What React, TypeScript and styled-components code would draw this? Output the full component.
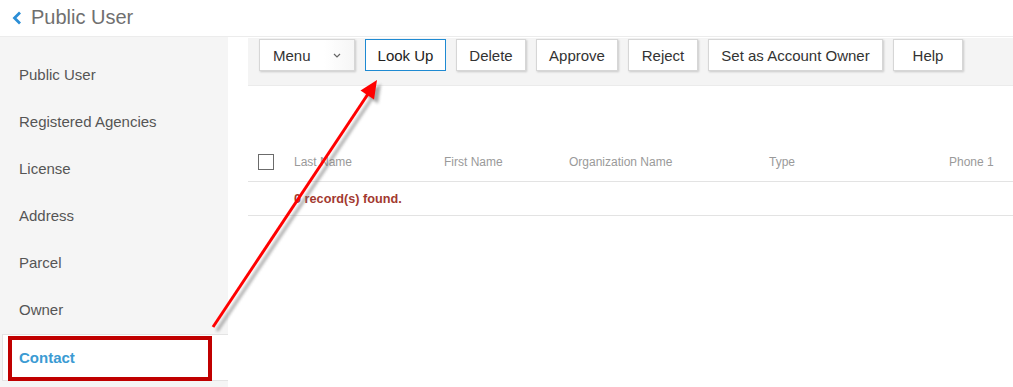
import React from "react";
import styled, { createGlobalStyle } from "styled-components";

const GlobalStyle = createGlobalStyle`
  html, body {
    margin: 0;
    padding: 0;
    background: #ffffff;
    font-family: "Liberation Sans", Arial, sans-serif;
  }
`;

const navItems = [
  "Public User",
  "Registered Agencies",
  "License",
  "Address",
  "Parcel",
  "Owner",
  "Contact",
];

const actions = [
  { label: "Look Up", width: 81, active: true },
  { label: "Delete", width: 70 },
  { label: "Approve", width: 82 },
  { label: "Reject", width: 70 },
  { label: "Set as Account Owner", width: 175 },
  { label: "Help", width: 70 },
];

const columns = [
  { label: "Last Name", width: 150 },
  { label: "First Name", width: 125 },
  { label: "Organization Name", width: 200 },
  { label: "Type", width: 180 },
  { label: "Phone 1", width: 80 },
];

export const App = () => {
  return (
    <Page>
      <GlobalStyle />
      <Header>
        <BackIcon viewBox="0 0 10 14">
          <path d="M8 1.5 L2.5 7 L8 12.5" />
        </BackIcon>
        <HeaderTitle>Public User</HeaderTitle>
      </Header>
      <Body>
        <Sidebar>
          {navItems.map((item) => (
            <NavItem key={item} $active={item === "Contact"}>
              {item}
            </NavItem>
          ))}
        </Sidebar>
        <Main>
          <Toolbar>
            <MenuButton>
              <span>Menu</span>
              <MenuCaret viewBox="0 0 8 5">
                <path d="M1 1 L4 4 L7 1" />
              </MenuCaret>
            </MenuButton>
            {actions.map((a) => (
              <ActionButton key={a.label} $active={a.active} $width={a.width}>
                {a.label}
              </ActionButton>
            ))}
          </Toolbar>
          <Table>
            <HeadRow>
              <CheckCell>
                <CheckBox />
              </CheckCell>
              {columns.map((c) => (
                <HeadCell key={c.label} $width={c.width}>
                  {c.label}
                </HeadCell>
              ))}
            </HeadRow>
            <EmptyRow>0 record(s) found.</EmptyRow>
          </Table>
        </Main>
      </Body>

      <HighlightBox />
      <Annotation width="1013" height="387" viewBox="0 0 1013 387">
        <defs>
          <filter id="arrowShadow" x="-20%" y="-20%" width="140%" height="140%">
            <feGaussianBlur stdDeviation="1.6" />
          </filter>
        </defs>
        <g transform="translate(4 4)" filter="url(#arrowShadow)" opacity="0.6">
          <line x1="213" y1="327" x2="368" y2="94" stroke="#707070" strokeWidth="3" />
          <polygon points="377,80 374,99.5 360.5,90.5" fill="#707070" />
        </g>
        <line x1="213" y1="327" x2="368" y2="94" stroke="#ff0000" strokeWidth="3" />
        <polygon points="377,80 374,99.5 360.5,90.5" fill="#ff0000" />
      </Annotation>
    </Page>
  );
};

export default App;

const Page = styled.div`
  position: relative;
  width: 1013px;
  height: 387px;
  overflow: hidden;
  background: #ffffff;
`;

const Header = styled.div`
  display: flex;
  align-items: center;
  height: 36px;
  padding-left: 12px;
  border-bottom: 1px solid #ececec;
  box-sizing: content-box;
`;

const BackIcon = styled.svg`
  width: 10px;
  height: 14px;
  margin-right: 9px;
  margin-top: -1px;

  path {
    fill: none;
    stroke: #2b8ed6;
    stroke-width: 2.8;
  }
`;

const HeaderTitle = styled.div`
  font-size: 20px;
  color: #707070;
  margin-top: -2px;
`;

const Body = styled.div`
  display: flex;
  height: 350px;
`;

const Sidebar = styled.div`
  width: 228px;
  flex-shrink: 0;
  background: #f5f5f5;
  padding-top: 14px;
  box-sizing: border-box;
`;

const NavItem = styled.div<{ $active?: boolean }>`
  display: flex;
  align-items: center;
  height: 47px;
  font-size: 15px;
  color: ${(p) => (p.$active ? "#3b9bd3" : "#555555")};
  font-weight: ${(p) => (p.$active ? "bold" : "normal")};
  background: ${(p) => (p.$active ? "#ffffff" : "transparent")};
  border-top: 1px solid ${(p) => (p.$active ? "#e4e4e4" : "transparent")};
  border-bottom: 1px solid ${(p) => (p.$active ? "#e4e4e4" : "transparent")};
  border-left: 1px solid ${(p) => (p.$active ? "#e4e4e4" : "transparent")};
  margin-left: ${(p) => (p.$active ? "2px" : "0")};
  margin-top: ${(p) => (p.$active ? "1px" : "0")};
  padding-left: ${(p) => (p.$active ? "16px" : "18px")};
  box-sizing: border-box;
`;

const Main = styled.div`
  flex: 1;
  padding-left: 20px;
  padding-top: 1px;
`;

const Toolbar = styled.div`
  display: flex;
  align-items: flex-start;
  gap: 10px;
  height: 48px;
  padding: 1px 0 0 11px;
  background: #f4f4f4;
  border-bottom: 1px solid #ebebeb;
  box-sizing: border-box;
`;

const buttonBase = `
  height: 32px;
  box-sizing: border-box;
  display: flex;
  align-items: center;
  justify-content: center;
  background: #ffffff;
  font-family: "Liberation Sans", Arial, sans-serif;
  font-size: 15px;
  color: #333333;
  cursor: pointer;
  flex-shrink: 0;
`;

const MenuButton = styled.div`
  ${buttonBase}
  width: 96px;
  justify-content: space-between;
  padding: 0 13px 0 13px;
  border: 1px solid #d6d6d6;
  box-shadow: 1px 1px 2px rgba(0, 0, 0, 0.18);
  background: linear-gradient(to right, #ffffff 68%, #f6f6f6 100%);
`;

const MenuCaret = styled.svg`
  width: 8px;
  height: 5px;

  path {
    fill: none;
    stroke: #666666;
    stroke-width: 1.2;
  }
`;

const ActionButton = styled.div<{ $active?: boolean; $width: number }>`
  ${buttonBase}
  width: ${(p) => p.$width}px;
  border: 1px solid ${(p) => (p.$active ? "#1f8ad2" : "#d6d6d6")};
  box-shadow: ${(p) => (p.$active ? "none" : "1px 1px 2px rgba(0, 0, 0, 0.18)")};
  color: ${(p) => (p.$active ? "#222222" : "#333333")};
`;

const Table = styled.div`
  margin-top: 57px;
`;

const HeadRow = styled.div`
  display: flex;
  align-items: center;
  height: 38px;
  border-bottom: 1px solid #e3e3e3;
`;

const CheckCell = styled.div`
  width: 46px;
  padding-left: 10px;
  box-sizing: border-box;
  display: flex;
  align-items: center;
`;

const CheckBox = styled.div`
  width: 16px;
  height: 16px;
  border: 1px solid #6b6b6b;
  box-sizing: border-box;
  background: #ffffff;
`;

const HeadCell = styled.div<{ $width: number }>`
  width: ${(p) => p.$width}px;
  font-size: 12px;
  color: #9a9a9a;
  flex-shrink: 0;
  white-space: nowrap;
`;

const EmptyRow = styled.div`
  display: flex;
  align-items: center;
  height: 33px;
  padding-left: 46px;
  font-size: 12.7px;
  font-weight: bold;
  color: #a3392f;
  border-bottom: 1px solid #e3e3e3;
`;

const HighlightBox = styled.div`
  position: absolute;
  left: 8px;
  top: 336px;
  width: 204px;
  height: 45px;
  border: 4px solid #c00000;
  box-sizing: border-box;
  pointer-events: none;
`;

const Annotation = styled.svg`
  position: absolute;
  left: 0;
  top: 0;
  pointer-events: none;
`;
